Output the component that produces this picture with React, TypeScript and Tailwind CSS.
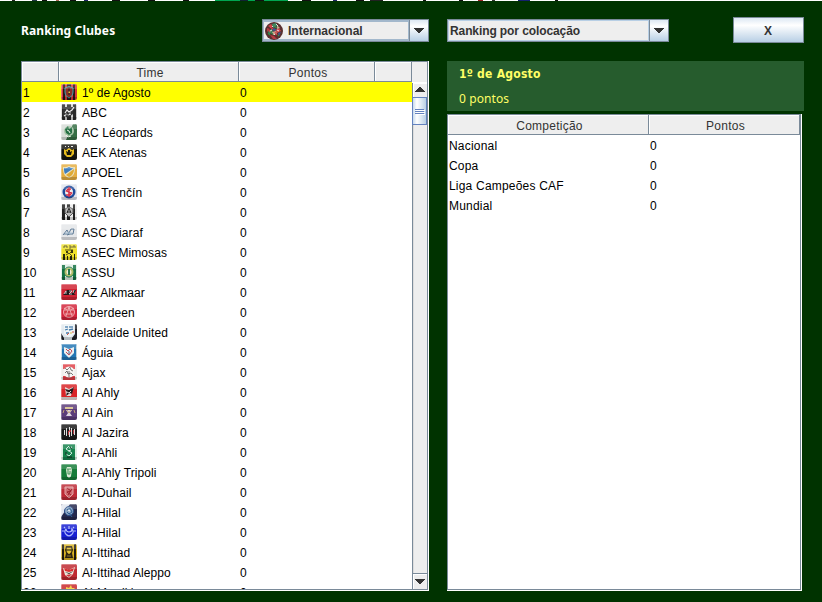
import type { ReactNode } from "react";

type Club = { name: string; bg: string; art: ReactNode };

const clubs: Club[] = [
  { name: "1º de Agosto", bg: "#d8383a", art: <><path d="M2 0h2v16H2zM6 0h4v16H6zM12 0h2v16h-2z" fill="#291313" /><path d="M8 2.500 12 4v4c0 3-2 5-4 6-2-1-4-3-4-6V4z" fill="#8b2c29" stroke="#3ba2b0" /><path d="M8 4v7" stroke="#1b2020" /><path d="M7.500 7.500h1.500v1.500H7.500z" fill="#f0c030" /></> },
  { name: "ABC", bg: "#d4d4d4", art: <><path d="M1 0h3v16H1zM6 0h4v16H6zM12 0h3v16h-3z" fill="#2a2a2a" /><path d="M2 3h10v7l-5 4-5-3z" fill="#333" /><path d="m3 12 3-2M4 9l2-3 2 2 3-2 2-3M7 11l3-1" stroke="#eee" strokeWidth="1.200" fill="none" /><path d="m4 10 3 1 3-3" stroke="#888" fill="none" /></> },
  { name: "AC Léopards", bg: "#d8ddd8", art: <><path d="M16 0v16H5L12 0z" fill="#356e44" /><circle cx="8" cy="7" r="5" fill="#a7c4a8" /><path d="m4 5 3-3 1 3 3-2v6l-3 2-3-2z" fill="#267044" /><path d="m6 6 2 1 1 2M5 11l2 2 3-1" stroke="#eaf2e6" fill="none" /></> },
  { name: "AEK Atenas", bg: "#171712", art: <><path d="M4 2.500h1M7 2.500h1M10 2.500h2" stroke="#eee" /><path d="m3 5 2 1 3-2 3 2 2-1v5l-3 3H6l-3-3z" fill="#e6bc20" /><path d="m5 7 2 1V6h2v2l2-1-1 4H6z" fill="#15150c" /></> },
  { name: "APOEL", bg: "#e5ae42", art: <><path d="M2 3c3 1 5-1 6-1s3 2 6 1c0 6-1 9-6 11C3 12 2 9 2 3z" fill="#e7e3c6" /><path d="M3 4c3 1 4-1 5-1s2 2 5 1l-9 6C3 8 3 6 3 4z" fill="#3d7dc0" /><path d="m5 11 8-6c0 4-2 7-5 8z" fill="#dfaa35" /></> },
  { name: "AS Trenčín", bg: "#e2e5ed", art: <><circle cx="8" cy="8" r="6.500" fill="#204b9a" /><circle cx="8" cy="8" r="4" fill="#eee" /><path d="M10 5H7L5.500 7l5 2L9 11H5M8 3v10" stroke="#d52e48" fill="none" strokeWidth="1.500" /></> },
  { name: "ASA", bg: "#ececec", art: <><path d="M1 0h3v16H1zM6 0h3v16H6zM12 0h2v16h-2z" fill="#202020" /><path d="m8 3 4 2v4l-4 4-4-4V5z" fill="#bbb" stroke="#555" /><path d="m6 9 2-5 2 5M6 8h4" stroke="#222" fill="none" /></> },
  { name: "ASC Diaraf", bg: "#e4e6e9", art: <><path d="m2 11 4-5 2 4H3M8 9l2-4h3l-1 5H9l-3 1" fill="none" stroke="#5b7894" /><path d="M4 9h7" stroke="#a9c2d6" /></> },
  { name: "ASEC Mimosas", bg: "#eee02c", art: <><path d="M2 10h2v6H2zM6 12h1v4H6zM9 12h2v4H9zM13 10h1v6h-1z" fill="#27270e" /><path d="M3 4V2h3v2M8 2h2v2H8M12 4V2h2v2M4 6h8M5 7l3 3 3-3M5 11l3-2 3 3" stroke="#554f18" fill="none" /><path d="M5 7h2v2H5zM10 6h2v3h-2z" fill="#39360f" /></> },
  { name: "ASSU", bg: "#e1eee5", art: <><path d="M1 1h3v15H1zM12 1h3v15h-3z" fill="#137142" /><circle cx="8" cy="8" r="5" fill="#b1bd6b" stroke="#16754a" /><circle cx="8" cy="8" r="2.500" fill="#f2f1d9" /><path d="M7 5h2v6H7z" fill="#23774e" /></> },
  { name: "AZ Alkmaar", bg: "#d02333", art: <><path d="m2 11 4-5h5L8 9h3l2-3h2l-2 4 2 1z" fill="#211a1c" /><path d="m3 10 2-3v3M8 7h3l-3 3h3M12 9l1-3" stroke="#ddd" fill="none" strokeWidth=".8" /></> },
  { name: "Aberdeen", bg: "#d3253b", art: <><circle cx="8" cy="8" r="5.500" fill="#d43c49" stroke="#f2a3aa" /><path d="M3 6h10M4 10h8M8 3 5 12M8 3l3 9M3 4l3 2M13 4l-3 2" stroke="#f3b6bb" strokeWidth=".8" /></> },
  { name: "Adelaide United", bg: "#dfe7ed", art: <><path d="M14 0h2v16h-2zM11 14l3-4v6h-3zM0 9l3 5v2H0z" fill="#202027" /><path d="M3 1h10v9l-5 4-5-4z" fill="#eef3f6" /><path d="M4 3h3M8 3h4M4 6l3-1M8 6l4-1M5 9h3" stroke="#447baa" strokeWidth="1.300" /><path d="M11 8h2M6 11l2-2" stroke="#d15444" /><path d="M9 9h2" stroke="#dfbd4c" /></> },
  { name: "Águia", bg: "#2376b4", art: <><path d="M0 0h1v16H0zM15 0h1v16h-1z" fill="#bed4de" /><path d="m3 3 5 2 5-2v6l-5 5-5-5z" fill="#e8eff0" /><path d="m5 5 2 2 2-2 2 2-3 4-3-3" stroke="#c64c59" fill="none" /><path d="M8 7v3" stroke="#45698b" /></> },
  { name: "Ajax", bg: "#efefed", art: <><path d="M2 0h12v5H2zM2 12h12v4H2z" fill="#df4148" /><circle cx="8" cy="8" r="5.500" fill="#f7f5f3" /><path d="m4 4 2 2 3-3 1 3 2 1M4 9l2-2 1 3 3-1 2 2M8 7v6" stroke="#555" fill="none" strokeWidth=".8" /></> },
  { name: "Al Ahly", bg: "#d92428", art: <><path d="M0 13h16v3H0z" fill="#e5dcda" /><path d="m4 3 4 2 4-2-2 9H5z" fill="#e8d9d7" /><path d="m4 5 4 1 5-3-2 7-2-1-4 3 1-4z" fill="#271b1d" /><path d="m6 8 2 1 2-2" stroke="#ddd" fill="none" /></> },
  { name: "Al Ain", bg: "#5b3c79", art: <><path d="M4 3h8v2H4z" fill="#d5bd86" /><path d="M5 6h6l-2 3 2 3H5l2-3z" fill="#ddd5e0" /><path d="M3 6 2 9M13 6l1 3M6 6l2 3 2-3" stroke="#c2a276" fill="none" /></> },
  { name: "Al Jazira", bg: "#1a1a1a", art: <><path d="M3.500 6v5M5.500 4v8M8.500 3v10M10.500 4v8M13.500 5v6" stroke="#ddd" /><path d="M7.500 7v4M12.500 6v4" stroke="#b53c42" /><circle cx="9" cy="7" r="1" fill="#db3d42" /></> },
  { name: "Al-Ahli", bg: "#dcefe3", art: <><path d="M2 0h12v16H2z" fill="#16824d" /><path d="m8 2-3 3 3 2 3 2-3 3-3-2M8 4l3-1M7 7l3-1" stroke="#d1eee0" fill="none" /><path d="M6 13h5M9 3l2 2M5 8v3" stroke="#102e20" /></> },
  { name: "Al-Ahly Tripoli", bg: "#167c39", art: <><path d="M6 3h4l1 3-1 6-2 2-2-2-1-6z" fill="#d4e7cd" /><path d="M6 5h4M7 5v5h2V7" stroke="#49955e" fill="none" /><path d="M6 12h4" stroke="#eee" /></> },
  { name: "Al-Duhail", bg: "#bd2b36", art: <><path d="M4 3h8v7l-4 4-4-4z" fill="#cf6b70" stroke="#e3a4a5" /><path d="m6 4 4 3-4 1 4 3M11 5l-4 6" stroke="#9d202a" fill="none" /></> },
  { name: "Al-Hilal", bg: "#24284d", art: <><path d="M0 0h9L0 13z" fill="#e2e6ef" /><circle cx="8" cy="7" r="4.500" fill="#8ba5c2" stroke="#284c87" /><path d="m6 6 3-2 2 4-3 2-2-2M8 9l3 4" stroke="#2b5c92" fill="none" /><path d="m7 6 2 1" stroke="#fff" /></> },
  { name: "Al-Hilal", bg: "#1720d2", art: <><path d="M5 5a4 4 0 1 0 6 0 3 3 0 1 1-6 0M8 2v3M3 7H1M13 7h2M4 4 3 3M12 4l1-1" stroke="#aeb9fa" fill="none" strokeWidth="1.200" /></> },
  { name: "Al-Ittihad", bg: "#d9b323", art: <><path d="M1 0h2v16H1zM13 0h2v16h-2z" fill="#201a0e" /><path d="M5 2h6l1 4-1 3 1 5H4l1-5-1-3z" fill="#302714" /><path d="M6 4h4v4l-2 2-2-2zM6 12h4" fill="#e5c73d" stroke="#d7af29" strokeWidth=".6" /><path d="M7 5v2M9 5v2" stroke="#171610" /></> },
  { name: "Al-Ittihad Aleppo", bg: "#bf2930", art: <><path d="m2 4 6 2 6-3-2 7-4 4-4-3z" fill="#ede8dc" /><path d="m3 4 5 2 5-2-1 3-4 1-4-1z" fill="#da2e31" /><path d="m4 8 4 1 5-2-5 3z" fill="#2b2521" /><path d="m5 11 3 2 3-3" fill="#cc343a" /></> },
  { name: "Al-Merrikh", bg: "#c9282c", art: <path d="m5 3 3 1 2-3 1 3h3l-3 3 1 4-4-2-3 2V7z" fill="#f4cf30" /> },
];

function Badge({ bg, art }: { bg: string; art: ReactNode }) {
  return (
    <span className="block size-4 shrink-0 overflow-hidden rounded-[2px]">
      <svg viewBox="0 0 16 16" className="size-4">
        <path fill={bg} d="M0 0h16v16H0z" />
        {art}
        <path d="M0 0h16v5H0z" fill="#fff" opacity=".16" />
        <path d="M0 13h16v3H0z" fill="#000" opacity=".18" />
        <path d="M.5 15V1.500l1-1h13" stroke="#fff" opacity=".3" fill="none" />
      </svg>
    </span>
  );
}

function Arrow({ up = false }: { up?: boolean }) {
  return (
    <svg width="10" height="5" viewBox="0 0 10 5" shapeRendering="crispEdges" className={up ? "rotate-180" : ""}>
      <path d="M0 0h10v1H9v1H8v1H7v1H6v1H4V4H3V3H2V2H1V1H0z" fill="#333" />
    </svg>
  );
}

function Combo({ label, wide = false }: { label: string; wide?: boolean }) {
  return (
    <div className={`flex h-[23px] border border-[#7a8a99] text-[12px] font-bold text-[#333] ${wide ? "w-[222px] tracking-[-.1px]" : "w-[167px]"}`}>
      <div className={`flex min-w-0 flex-1 items-center border bg-[#eee] pl-[1px] ${wide ? "border-[#b8cfe5]" : "border-y-2 border-[#a3b8cc]"}`}>
        {!wide && (
          <svg viewBox="0 0 18 18" className="mr-[5px] size-[18px]">
            <circle cx="9" cy="9" r="9" fill="#5a3030" />
            <path d="m3 4 3-2 2 2-2 2zM10 8l4-2 2 3-4 2z" fill="#d0454b" />
            <path d="m7 2 4-1 1 3-4 2zM3 9l4-2 1 3-4 2z" fill="#3f8a5f" />
            <path d="m12 3 3 3-3 1zM7 10l4-1 1 3-4 1z" fill="#caa78f" />
            <path d="m5 13 4 1 3 3H8zM2 6l3 1-3 3z" fill="#b73941" />
            <path d="m9 6 3 2-3 1-2-1zM13 11l3-1-2 4z" fill="#3c5794" />
            <path d="m11 2 2 2M5 9l2-1M12 8l2 1M9 12l1 1M7 4l1 1" stroke="#eee" strokeWidth=".9" />
            <path d="m6 11 2 1M10 5l2 1M3 11l2 2M13 13l1 1" stroke="#2f8d4d" strokeWidth="1.200" />
            <path d="m5 5 3 2M10 10l2 3M4 8l1 2" stroke="#d8414b" strokeWidth="1.200" />
          </svg>
        )}
        <span className="whitespace-nowrap">{label}</span>
      </div>
      <div className="flex w-[19px] shrink-0 items-center justify-center border-l border-[#7a8a99] bg-linear-to-b from-[#dde8f3] via-white via-30% to-[#b8cfe5]">
        <Arrow />
      </div>
    </div>
  );
}

function HeaderCell({ className, children }: { className: string; children?: ReactNode }) {
  return (
    <div className={`h-5 shrink-0 border-r border-b border-[#7a8a99] bg-[#eee] pl-[3px] text-center leading-[22px] text-[#333] shadow-[inset_1px_1px_0_white] ${className}`}>
      {children}
    </div>
  );
}

function ClubTable() {
  return (
    <section className="flex h-[530px] w-[408px] border-r border-b border-white">
      <div className="flex w-full border border-[#7a8a99] bg-white">
        <div className="w-[390px] shrink-0 overflow-hidden">
          <div className="flex tracking-[.25px]">
            <HeaderCell className="w-[37px]" />
            <HeaderCell className="w-[180px]">Time</HeaderCell>
            <HeaderCell className="w-[136px]">Pontos</HeaderCell>
            <HeaderCell className="w-[37px]" />
          </div>
          {clubs.map((club, i) => (
            <div key={i} className={`flex h-5 items-center whitespace-nowrap pl-[1px] ${i === 0 ? "bg-[#ffff00]" : ""}`}>
              <span className="w-[38px] pt-[2px] leading-[20px]">{i + 1}</span>
              <Badge bg={club.bg} art={club.art} />
              <span className="ml-[5px] w-[158px] pt-[2px] leading-[20px] tracking-[.08px]">{club.name}</span>
              <span className="pt-[2px] leading-[20px]">0</span>
            </div>
          ))}
        </div>
        <div className="flex min-w-0 flex-1 flex-col bg-[#eee]">
          <div className="h-[21px] shrink-0 border-b border-white" />
          <div className="flex min-h-0 flex-1 flex-col border-l border-[#7a8a99]">
            <div className="flex h-[14px] items-start justify-center pt-[4px] shadow-[inset_1px_1px_0_white]"><Arrow up /></div>
            <div className="-ml-px flex h-7 flex-col items-center justify-center gap-px border border-[#6382bf] bg-linear-to-r from-[#c8dbed] via-white via-30% to-[#b8cfe5]">
              {[0, 1, 2].map((n) => <i key={n} className="h-px w-[9px] bg-[#6382bf] shadow-[1px_1px_0_white]" />)}
            </div>
            <div className="flex-1 shadow-[inset_1px_0_0_#ddd]" />
            <div className="flex h-4 items-center justify-center border-t border-[#7a8a99] shadow-[inset_1px_1px_0_white]"><Arrow /></div>
          </div>
        </div>
      </div>
    </section>
  );
}

const competitions = ["Nacional", "Copa", "Liga Campeões CAF", "Mundial"];

function Details() {
  return (
    <section className="flex flex-col">
      <div className="h-[50px] w-[357px] bg-[#265c2d] pl-3 text-[12px] text-[#ffff66]">
        <div className="h-[25px] font-['DejaVu_Sans_Condensed','DejaVu_Sans',sans-serif] font-bold leading-[26px] tracking-[.25px] [font-stretch:condensed]">1º de Agosto</div>
        <div className="font-['Noto_Sans',sans-serif] leading-[26px] tracking-[.1px]">0 pontos</div>
      </div>
      <div className="mt-[3px] h-[477px] w-[355px] border-r border-b border-white">
        <div className="h-full border border-[#7a8a99] bg-white">
          <div className="flex tracking-[.25px]">
            <HeaderCell className="w-[201px]">Competição</HeaderCell>
            <HeaderCell className="w-[151px]">Pontos</HeaderCell>
          </div>
          {competitions.map((name) => (
            <div key={name} className="flex h-5 pl-[1px] leading-[22px] tracking-[.2px]">
              <span className="w-[201px]">{name}</span>
              <span>0</span>
            </div>
          ))}
        </div>
      </div>
    </section>
  );
}

const specks = [[0, 10, "#fff"], [12, 3, "#222"], [32, 5, "#234"], [42, 5, "#111"], [56, 3, "#a65"], [70, 6, "#111"], [84, 4, "#226"], [112, 8, "#111"], [148, 7, "#111"], [183, 6, "#111"], [215, 73, "#00a651"], [240, 8, "#123"], [255, 9, "#111"], [302, 9, "#111"], [333, 4, "#226"], [356, 8, "#111"], [370, 13, "#222"], [423, 3, "#111"], [459, 4, "#111"], [478, 5, "#922"], [492, 3, "#333"], [518, 12, "#15206e"], [555, 3, "#111"]] as const;

export default function App() {
  return (
    <main className="h-[602px] w-[822px] overflow-hidden bg-[#003300] font-['Liberation_Sans',Arial,sans-serif] text-[12px] text-black">
      <svg width="822" height="1" className="block bg-white" shapeRendering="crispEdges">
        {specks.map(([x, w, color]) => <rect key={x} x={x} width={w} height="1" fill={color} />)}
      </svg>
      <header className="flex h-[60px] items-start pl-[21px]">
        <h1 className="mt-[20px] w-[241px] font-['Noto_Sans',sans-serif] text-[12px] font-bold leading-[20px] tracking-[.15px] text-white">Ranking Clubes</h1>
        <div className="mt-[18px]"><Combo label="Internacional" /></div>
        <div className="mt-[18px] ml-[18px]"><Combo label="Ranking por colocação" wide /></div>
        <button className="mt-4 ml-16 h-[26px] w-[71px] border border-[#7a8a99] bg-linear-to-b from-[#dde8f3] via-white via-30% to-[#b8cfe5] pt-[2px] pr-px text-[12px] font-bold text-[#333]">X</button>
      </header>
      <div className="flex gap-[18px] pl-[21px]">
        <ClubTable />
        <Details />
      </div>
    </main>
  );
}
